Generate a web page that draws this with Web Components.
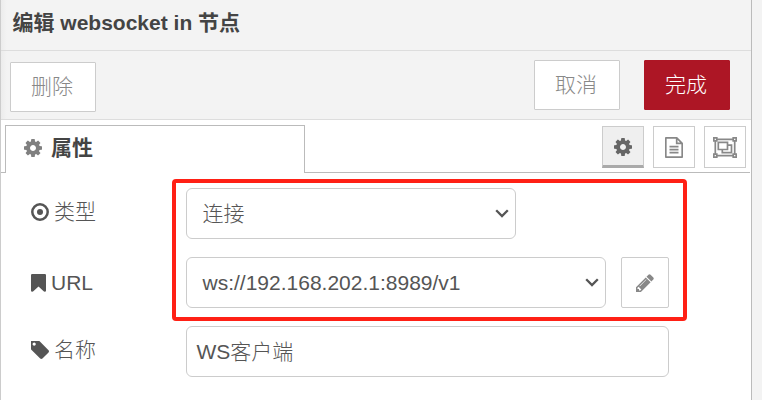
<!DOCTYPE html>
<html lang="zh">
<head>
<meta charset="utf-8">
<title>编辑 websocket in 节点</title>
<style>
html,body{margin:0;height:100%;overflow:hidden;background:#f3f3f3}
body{font-family:"Liberation Sans","Noto Sans CJK SC",sans-serif;font-size:21px;font-weight:300;color:#555}
</style>
</head>
<body>
<node-editor></node-editor>
<script>
const define = (name, html, setup) => customElements.define(name, class extends HTMLElement {
  connectedCallback() {
    if (this.shadowRoot) return;
    const t = document.createElement('template');
    t.innerHTML = '<style>*{box-sizing:border-box}:host{box-sizing:border-box}</style>' + html;
    this.attachShadow({mode: 'open'}).append(t.content.cloneNode(true));
    if (setup) setup(this, this.shadowRoot);
  }
});

const icons = {
  cog: ['128 128 1536 1536', '<path d="M1152 896q0-106-75-181t-181-75-181 75-75 181 75 181 181 75 181-75 75-181zm512-109v222q0 12-8 23t-20 13l-185 28q-19 54-39 91 35 50 107 138 10 12 10 25t-9 23q-27 37-99 108t-94 71q-12 0-26-9l-138-108q-44 23-91 38-16 136-29 186-7 28-36 28h-222q-14 0-24.500-8.500t-11.500-21.500l-28-184q-49-16-90-37l-141 107q-10 9-25 9-14 0-25-11-126-114-165-168-7-10-7-23 0-12 8-23 15-21 51-66.500t54-70.500q-27-50-41-99l-183-27q-13-2-21-12.500t-8-23.500v-222q0-12 8-23t19-13l186-28q14-46 39-92-40-57-107-138-10-12-10-24 0-10 9-23 26-36 98.500-107.500t94.500-71.500q13 0 26 10l138 107q44-23 91-38 16-136 29-186 7-28 36-28h222q14 0 24.500 8.500t11.500 21.500l28 184q49 16 90 37l142-107q9-9 24-9 13 0 25 10 129 119 165 170 7 8 7 22 0 12-8 23-15 21-51 66.500t-54 70.500q26 50 41 98l183 28q13 2 21 12.500t8 23.500z"/>'],
  pencil: ['128 128 1536 1536', '<path d="M491 1536l91-91-235-235-91 91v107h128v128h107zm523-928q0-22-22-22-10 0-17 7l-542 542q-7 7-7 17 0 22 22 22 10 0 17-7l542-542q7-7 7-17zm-54-192l416 416-832 832h-416v-416zm683 96q0 53-37 90l-166 166-416-416 166-165q36-38 90-38 53 0 91 38l235 234q37 39 37 91z"/>'],
  tag: ['192 192 1451 1451', '<path d="M576 448q0-53-37.500-90.500t-90.500-37.500-90.500 37.500-37.500 90.500 37.500 90.500 90.500 37.500 90.500-37.500 37.500-90.500zm1067 576q0 53-37 90l-491 492q-39 37-91 37-53 0-90-37l-715-716q-38-37-64.500-101t-26.500-117v-416q0-52 38-90t90-38h416q53 0 117 26.500t102 64.500l715 714q37 39 37 91z"/>'],
  bookmark: ['256 128 1280 1536', '<path d="M1420 128q23 0 44 9 33 13 52.500 41t19.500 62v1289q0 34-19.500 62t-52.500 41q-19 8-44 8-48 0-83-32l-441-424-441 424q-36 33-83 33-23 0-44-9-33-13-52.500-41t-19.500-62v-1289q0-34 19.500-62t52.500-41q21-9 44-9h1048z"/>'],
  dot: ['0 0 18 18', '<circle cx="9" cy="9" r="7.7" fill="none" stroke="currentColor" stroke-width="2.5"/><circle cx="9" cy="9" r="3"/>'],
  file: ['0 0 18 21', '<g fill="none" stroke="currentColor" stroke-width="1.7"><path d="M11.7.8H1.3Q.8.8.8 1.3v18.400q0 .5.5.5h15.400q.5 0 .5-.5V6.300zM11.700.8v5.500h5.500M4.500 9.700h9M4.500 12.700h9M4.500 15.700h9"/></g>'],
  group: ['0 0 24 21', '<g fill="none" stroke="currentColor" stroke-width="1.700"><path d="M4 2.300h16M4 18.700h16M2.300 4v13M21.700 4v13"/><path d="M.8.8h3v3h-3zM20.200.8h3v3h-3zM.8 17.200h3v3h-3zM20.200 17.200h3v3h-3z"/><path d="M5.300 5.300h9.200v7.200H5.300zM14.500 8.200h4v7.500H9.300v-3.200"/></g>'],
  chevron: ['0 0 14 9', '<path d="M1.200 1.300L7 7.100l5.800-5.800" fill="none" stroke="currentColor" stroke-width="2.300"/>']
};
define('ui-icon', '<style>:host{display:block;flex:none}svg{display:block;width:100%;height:100%;fill:currentColor}</style><svg></svg>', (el, root) => {
  const [box, shape] = icons[el.getAttribute('name')], svg = root.querySelector('svg');
  svg.setAttribute('viewBox', box);
  svg.innerHTML = shape;
  el.style.width = el.getAttribute('w') + 'px';
  el.style.height = el.getAttribute('h') + 'px';
});

define('ui-button', `<style>
:host{display:flex;align-items:center;justify-content:center;width:86px;height:50px;border:1px solid #ccc;border-radius:1px;background:#fff;color:#888;line-height:30px;padding-right:2px}
:host([primary]){background:#ad1625;border-color:#ad1625;color:#fff}
</style><slot></slot>`);

define('icon-button', `<style>
:host{display:flex;align-items:center;justify-content:center;width:42px;height:42px;border:1px solid #ccc;background:#fff;color:#888}
:host([selected]){background:#efefef;border-bottom:3px solid #aaa;color:#666;padding-top:1px}
:host([tall]){width:48px;height:51px;border-radius:2px}
</style><slot></slot>`);

define('ui-field', `<style>
:host{display:flex;align-items:center;justify-content:space-between;height:51px;border:1px solid #ccc;border-radius:6px;background:#fff;padding:0 6px 0 15.5px;line-height:30px;white-space:nowrap}
:host([plain]){padding-left:9.5px;padding-top:1px}
</style><span><slot></slot></span><slot name="end"></slot>`);

define('form-row', `<style>
:host{display:grid;grid-template-columns:155px 483px;height:51px}
.label{display:flex;align-items:center;gap:5px;height:47px;line-height:30px}
:host([lower]) .label{height:51px}
.control{display:flex;gap:15px}
</style><div class="label"><slot name="label"></slot></div><div class="control"><slot></slot></div>`);

define('editor-header', `<style>
:host{display:block;height:51px;border-bottom:1px solid #ddd;padding:8px 0 0 11.5px;font-weight:bold;font-size:21px;line-height:30px;color:#444;white-space:nowrap}
</style><slot></slot>`);

define('editor-toolbar', `<style>
:host{display:flex;justify-content:space-between;height:69px;border-bottom:1px solid #ddd;padding:9px 21px 0 9px}
.left{padding-top:2px}.right{display:flex;gap:24px}
</style><div class="left"><slot name="left"></slot></div><div class="right"><slot></slot></div>`);

define('editor-tabs', `<style>
:host{display:grid;grid-template-columns:4px 300px 1fr;height:53px;padding:5px 1px 0 0}
.edge{border-bottom:1px solid #bbb}
.tab{display:flex;align-items:center;gap:9px;border:1px solid #bbb;border-bottom:0;padding:0 0 3px 18px;font-weight:bold;color:#444;line-height:30px}
.tools{display:flex;justify-content:flex-end;gap:9px;border-bottom:1px solid #bbb;padding:1px 4px 0 0}
</style><div class="edge"></div><div class="tab"><slot name="tab"></slot></div><div class="tools"><slot></slot></div>`);

define('focus-frame', `<style>
:host{display:block;position:absolute;left:172px;top:179px;width:515px;height:142px;border:4px solid #ff2015;border-radius:4px;pointer-events:none}
</style>`);

define('node-editor', `<style>
:host{display:block;width:752px;height:400px;border-left:1px solid #ccc;border-right:1px solid #bbb;background:#fff}
.top{background:linear-gradient(90deg,#ececec,#f3f3f3 6px)}
.form{display:grid;gap:18px;padding:15px 0 0 30px}
</style>
<div class="top">
<editor-header>编辑 websocket in 节点</editor-header>
<editor-toolbar><ui-button slot="left">删除</ui-button><ui-button>取消</ui-button><ui-button primary>完成</ui-button></editor-toolbar>
</div>
<editor-tabs>
<ui-icon slot="tab" name="cog" w="18" h="18" style="color:#808080"></ui-icon><span slot="tab">属性</span>
<icon-button selected><ui-icon name="cog" w="18" h="18"></ui-icon></icon-button>
<icon-button><ui-icon name="file" w="18" h="21"></ui-icon></icon-button>
<icon-button><ui-icon name="group" w="24" h="21"></ui-icon></icon-button>
</editor-tabs>
<div class="form">
<form-row><ui-icon slot="label" name="dot" w="18" h="18"></ui-icon><span slot="label">类型</span><ui-field style="width:330px"><span>连接</span><ui-icon slot="end" name="chevron" w="14" h="9"></ui-icon></ui-field></form-row>
<form-row lower><ui-icon slot="label" name="bookmark" w="15" h="18"></ui-icon><span slot="label">URL</span><ui-field style="width:420px"><span>ws://192.168.202.1:8989/v1</span><ui-icon slot="end" name="chevron" w="14" h="9"></ui-icon></ui-field><icon-button tall><ui-icon name="pencil" w="18" h="18"></ui-icon></icon-button></form-row>
<form-row><ui-icon slot="label" name="tag" w="18" h="18"></ui-icon><span slot="label">名称</span><ui-field plain style="width:483px">WS客户端</ui-field></form-row>
</div>
<focus-frame></focus-frame>`);
</script>
</body>
</html>
